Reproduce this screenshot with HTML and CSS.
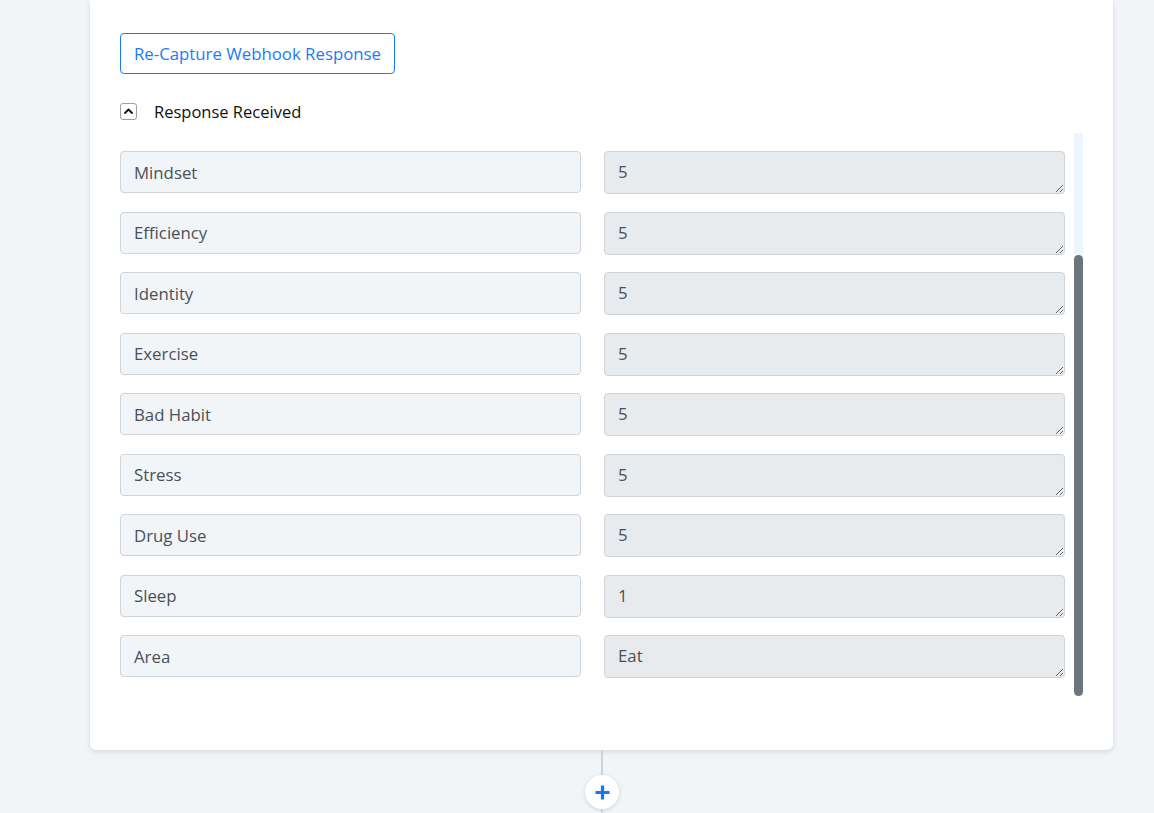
FILE: index.html
```html
<!DOCTYPE html>
<html lang="en">
<head>
<meta charset="utf-8">
<title>Webhook Response</title>
<link rel="stylesheet" href="styles.css">
</head>
<body>
<div class="page">
  <section class="card">
    <button class="btn-outline" type="button">Re-Capture Webhook Response</button>
    <div class="toggle-row">
      <span class="toggle-box">
        <svg width="9" height="6" viewBox="0 0 9 6"><path d="M1 5 L4.5 1.5 L8 5" fill="none" stroke="#111" stroke-width="1.8" stroke-linecap="round" stroke-linejoin="round"/></svg>
      </span>
      <span class="toggle-label">Response Received</span>
    </div>
    <div class="response-wrap">
      <div class="rows">
        <div class="row"><div class="key">Mindset</div><textarea class="val" readonly>5</textarea></div>
        <div class="row"><div class="key">Efficiency</div><textarea class="val" readonly>5</textarea></div>
        <div class="row"><div class="key">Identity</div><textarea class="val" readonly>5</textarea></div>
        <div class="row"><div class="key">Exercise</div><textarea class="val" readonly>5</textarea></div>
        <div class="row"><div class="key">Bad Habit</div><textarea class="val" readonly>5</textarea></div>
        <div class="row"><div class="key">Stress</div><textarea class="val" readonly>5</textarea></div>
        <div class="row"><div class="key">Drug Use</div><textarea class="val" readonly>5</textarea></div>
        <div class="row"><div class="key">Sleep</div><textarea class="val" readonly>1</textarea></div>
        <div class="row"><div class="key">Area</div><textarea class="val" readonly>Eat</textarea></div>
      </div>
      <div class="scroll-track"><div class="scroll-thumb"></div></div>
    </div>
  </section>
  <div class="connector">
    <span class="line"></span>
    <button class="add-step" type="button" aria-label="Add step">
      <svg width="17" height="17" viewBox="0 0 17 17"><path d="M8.5 1.5 V15.5 M1.5 8.5 H15.5" stroke="#1477f8" stroke-width="3.2" stroke-linecap="butt"/></svg>
    </button>
    <span class="line line-bottom"></span>
  </div>
</div>
</body>
</html>
```
FILE: styles.css
```css
html, body {
  margin: 0;
  padding: 0;
  background: #f2f5f8;
  font-family: "Open Sans", "Noto Sans", sans-serif;
  height: 813px;
  overflow: hidden;
}

.page {
  display: flex;
  flex-direction: column;
  align-items: flex-start;
}

.card {
  margin-left: 90px;
  width: 1023px;
  box-sizing: border-box;
  background: #fff;
  border-radius: 0 0 6px 6px;
  box-shadow: 0 2px 5px rgba(30, 50, 80, 0.14);
  padding: 33px 30px 54px 30px;
  display: flex;
  flex-direction: column;
  align-items: flex-start;
}

.btn-outline {
  height: 41px;
  padding: 0 13px;
  border: 1px solid #1a7cf5;
  border-radius: 4px;
  background: #fff;
  color: #1a7cf5;
  font-family: inherit;
  font-size: 16.8px;
}

.toggle-row {
  margin-top: 27px;
  display: flex;
  align-items: center;
  gap: 17px;
  height: 20px;
}

.toggle-box {
  width: 15px;
  height: 15px;
  border: 1px solid #9aa0a6;
  border-radius: 3px;
  display: flex;
  align-items: center;
  justify-content: center;
}

.toggle-label {
  font-size: 16.5px;
  color: #111;
}

.response-wrap {
  margin-top: 12px;
  display: flex;
  width: 963px;
  gap: 9px;
  height: 563px;
}

.rows {
  flex: 1;
  padding-top: 18px;
  display: flex;
  flex-direction: column;
  gap: 18.5px;
}

.row {
  display: flex;
  gap: 23px;
  height: 42px;
}

.key, .val {
  flex: 1;
  box-sizing: border-box;
  border: 1px solid #ced4da;
  border-radius: 4px;
  font-family: inherit;
  font-size: 16.8px;
  color: #495057;
  padding: 0 13px;
}

.key {
  height: 42px;
  background: #f2f5f8;
  display: flex;
  align-items: center;
}

.val {
  height: 43px;
  background: #e8ebee;
  resize: vertical;
  padding-top: 9px;
  line-height: 22px;
  overflow: hidden;
  outline: none;
}

.scroll-track {
  width: 9px;
  background: #eef5ff;
  display: flex;
  flex-direction: column;
  justify-content: flex-end;
}

.scroll-thumb {
  height: 441px;
  background: #6c747d;
  border-radius: 5px;
}

.connector {
  margin-left: 584px;
  width: 36px;
  display: flex;
  flex-direction: column;
  align-items: center;
}

.line {
  width: 2px;
  height: 25px;
  background: #cfd3d8;
}

.line-bottom {
  height: 10px;
}

.add-step {
  width: 34px;
  height: 34px;
  border-radius: 50%;
  border: none;
  background: #fff;
  box-shadow: 0 1px 4px rgba(0, 0, 0, 0.15);
  display: flex;
  align-items: center;
  justify-content: center;
  padding: 0;
}
```
